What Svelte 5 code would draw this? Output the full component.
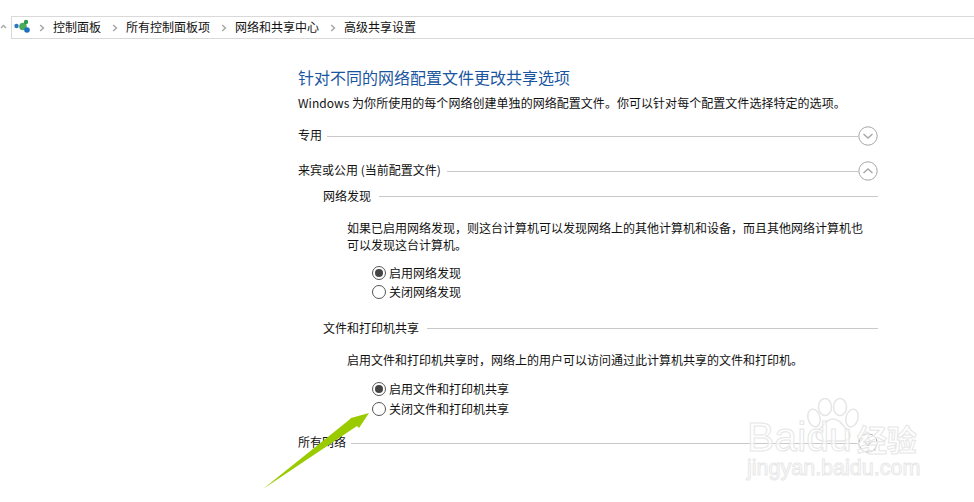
<script>
  const crumbs = ["控制面板", "所有控制面板项", "网络和共享中心", "高级共享设置"];
</script>

<div class="page">
  <div class="navrow">
    <svg class="up" width="11" height="8" viewBox="0 0 11 8"><path d="M1 4 L3.5 1.5 L6 4" fill="none" stroke="#a8a8a8" stroke-width="1.4" /></svg>
    <div class="crumbbar">
      <svg class="netlogo" width="18" height="18" viewBox="0 0 18 18">
        <circle cx="2.5" cy="7" r="2.2" fill="#2b78c5" />
        <circle cx="9" cy="7.5" r="3.8" fill="#4bab5c" />
        <circle cx="12" cy="3" r="2.2" fill="#2f9a4f" />
        <circle cx="13" cy="11" r="2.8" fill="#1f6fc0" />
      </svg>
      {#each crumbs as c}
        <svg class="sep" width="6" height="8" viewBox="0 0 6 8"><path d="M1.2 1 L4.4 4 L1.2 7" fill="none" stroke="#aaa" stroke-width="1.6" /></svg>
        <span class="crumb">{c}</span>
      {/each}
    </div>
  </div>

  <main class="content">
    <h1>针对不同的网络配置文件更改共享选项</h1>
    <p class="desc">Windows 为你所使用的每个网络创建单独的网络配置文件。你可以针对每个配置文件选择特定的选项。</p>

    <div class="head first">
      <span>专用</span><i></i>
      <svg class="chev" width="20" height="20" viewBox="0 0 20 20"><circle cx="10" cy="10" r="9.2" fill="#fff" stroke="#a6a6a6" /><path d="M5.5 8 L10 12 L14.5 8" fill="none" stroke="#a6a6a6" stroke-width="1.4" /></svg>
    </div>
    <div class="head second">
      <span>来宾或公用 (当前配置文件)</span><i></i>
      <svg class="chev" width="20" height="20" viewBox="0 0 20 20"><circle cx="10" cy="10" r="9.2" fill="#fff" stroke="#a6a6a6" /><path d="M5.5 12 L10 8 L14.5 12" fill="none" stroke="#a6a6a6" stroke-width="1.4" /></svg>
    </div>

    <section class="sub">
      <div class="subhead"><span>网络发现</span><i></i></div>
      <p class="para wide">如果已启用网络发现，则这台计算机可以发现网络上的其他计算机和设备，而且其他网络计算机也可以发现这台计算机。</p>
      <div class="radios r1">
        <label class="radio"><b class="dot on"></b>启用网络发现</label>
        <label class="radio"><b class="dot"></b>关闭网络发现</label>
      </div>
    </section>

    <section class="sub files">
      <div class="subhead"><span>文件和打印机共享</span><i></i></div>
      <p class="para single">启用文件和打印机共享时，网络上的用户可以访问通过此计算机共享的文件和打印机。</p>
      <div class="radios r2">
        <label class="radio"><b class="dot on"></b>启用文件和打印机共享</label>
        <label class="radio"><b class="dot"></b>关闭文件和打印机共享</label>
      </div>
    </section>

    <div class="head last">
      <span>所有网络</span><i></i>
      <svg class="chev" width="20" height="20" viewBox="0 0 20 20"><circle cx="10" cy="10" r="9.2" fill="#fff" stroke="#a6a6a6" /><path d="M5.5 8 L10 12 L14.5 8" fill="none" stroke="#a6a6a6" stroke-width="1.4" /></svg>
    </div>
  </main>

  <svg class="arrow" width="125" height="95" viewBox="0 0 125 95">
    <path d="M6 93 L92 24 L94 22 L112 17 L102 32 L100 30 Z" fill="#9acb00" />
  </svg>

  <div class="mark">
    <svg class="paw" width="54" height="44" viewBox="0 0 54 44">
      <g fill="rgba(255,255,255,0.6)" stroke="#e6e6e6" stroke-width="1.5">
        <ellipse cx="8" cy="20" rx="6" ry="9" transform="rotate(-15 8 20)" />
        <ellipse cx="19" cy="9" rx="6.5" ry="8.5" />
        <ellipse cx="34" cy="9" rx="6.5" ry="8.5" />
        <ellipse cx="46" cy="20" rx="6" ry="9" transform="rotate(15 46 20)" />
        <path d="M27 21 C20 21 17 28 12 33 C8 38 11 43 18 43 L36 43 C44 43 46 38 42 33 C37 28 34 21 27 21 Z" />
      </g>
    </svg>
    <div class="brand">Baidu<span>经验</span></div>
    <div class="url">jingyan.baidu.com</div>
  </div>
</div>

<style>
  :global(body) {
    margin: 0;
    background: #fff;
  }

  .page {
    position: relative;
    width: 974px;
    height: 502px;
    overflow: hidden;
    background: #fff;
    font-family: "Noto Sans CJK SC", "Noto Sans", sans-serif;
    font-size: 12px;
    color: #111;
  }

  .navrow {
    display: flex;
    align-items: center;
    padding-top: 16px;
    height: 23px;
  }

  .up {
    width: 11px;
    flex: none;
  }

  .crumbbar {
    flex: 1;
    height: 21px;
    display: flex;
    align-items: center;
    border: 1px solid #d9d9d9;
    border-right: 0;
  }

  .netlogo {
    margin-left: 2px;
    flex: none;
  }

  .sep {
    margin: 0 8px 0 7px;
    flex: none;
  }

  .crumb {
    line-height: 19px;
    padding-bottom: 2px;
    margin-right: 4px;
  }

  .content {
    margin-left: 298px;
    width: 580px;
  }

  h1 {
    margin: 27px 0 0;
    font-size: 16px;
    font-weight: 400;
    line-height: 22px;
    color: #1a56a0;
  }

  .desc {
    margin: 6px 0 0;
    line-height: 18px;
    white-space: nowrap;
    letter-spacing: 0.04px;
  }

  .head,
  .subhead {
    display: flex;
    align-items: center;
    height: 20px;
  }

  .head span {
    flex: none;
    margin-right: 5px;
    padding-bottom: 3px;
  }

  .subhead span {
    flex: none;
    margin-right: 8px;
    padding-bottom: 1px;
  }

  .head i,
  .subhead i {
    flex: 1;
    height: 1px;
    background: #c9c9c9;
  }

  .chev {
    flex: none;
  }

  .first {
    margin-top: 14px;
  }

  .second {
    margin-top: 15px;
  }

  .second span {
    margin-right: 6px;
  }

  .sub {
    margin-left: 25px;
  }

  .subhead {
    margin-top: 5px;
  }

  .para {
    margin: 13px 0 0 24px;
    line-height: 17px;
  }

  .wide {
    width: 525px;
  }

  .single {
    width: 540px;
    margin-top: 13px;
  }

  .radios {
    margin-left: 49px;
    display: flex;
    flex-direction: column;
  }

  .r1 {
    margin-top: 11px;
    gap: 1px;
  }

  .r2 {
    margin-top: 12px;
    gap: 2px;
  }

  .files .subhead {
    margin-top: 17px;
  }

  .radio {
    display: flex;
    align-items: center;
    height: 18px;
    line-height: 18px;
  }

  .dot {
    box-sizing: border-box;
    width: 14px;
    height: 14px;
    margin-right: 3px;
    border: 1px solid #555;
    border-radius: 50%;
    background: #fff;
    position: relative;
  }

  .dot.on::after {
    content: "";
    position: absolute;
    left: 2px;
    top: 2px;
    width: 8px;
    height: 8px;
    border-radius: 50%;
    background: #444;
  }

  .last {
    margin-top: 15px;
  }

  .arrow {
    position: absolute;
    left: 257px;
    top: 396px;
  }

  .mark {
    position: absolute;
    left: 746px;
    top: 397px;
    width: 180px;
    font-family: "Liberation Sans", sans-serif;
    color: rgba(255, 255, 255, 0.6);
  }

  .paw {
    position: absolute;
    left: 60px;
    top: 1px;
  }

  .brand {
    position: absolute;
    left: 1px;
    top: 20px;
    font-size: 41px;
    line-height: 40px;
    white-space: nowrap;
    -webkit-text-stroke: 1px #e6e6e6;
  }

  .brand span {
    font-family: "Noto Sans CJK SC", sans-serif;
    font-size: 30px;
    font-weight: 700;
    margin-left: 5px;
  }

  .url {
    position: absolute;
    left: 1px;
    top: 58px;
    font-size: 21.5px;
    line-height: 26px;
    white-space: nowrap;
    -webkit-text-stroke: 1px #e8e8e8;
  }
</style>
